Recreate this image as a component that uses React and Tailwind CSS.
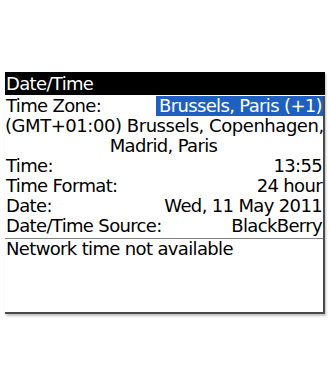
export default function App() {
  const rows = [
    ["Time:", "13:55"],
    ["Time Format:", "24 hour"],
    ["Date:", "Wed, 11 May 2011"],
    ["Date/Time Source:", "BlackBerry"],
  ];

  return (
    <div
      className="h-[385px] w-[330px] bg-white pl-[5px] pt-[72px] text-black"
      style={{ fontFamily: '"DejaVu Sans", sans-serif' }}
    >
      <div className="w-[320px] shadow-[1px_2px_2px_rgba(0,0,0,0.25)]">
        <div className="flex h-[23px] items-center bg-black pl-[1px] text-[18px] leading-[20px] tracking-[-0.65px] text-white">
          Date/Time
        </div>
        <div className="h-[218px] border-b-2 border-r-2 border-[#4a4a4a] text-[18px] leading-[20px] tracking-[-0.65px]">
          <div className="mt-[1px] flex justify-between">
            <span className="pl-[1px]">Time Zone:</span>
            <span className="bg-[#1e5fbf] pl-[3px] pr-[1px] text-white">Brussels, Paris (+1)</span>
          </div>
          <div className="whitespace-nowrap pr-[1px] text-center">
            <span className="tracking-[-0.45px]">(GMT+01:00) Brussels, Copenhagen,</span>
            <br />
            Madrid, Paris
          </div>
          {rows.map(([k, v]) => (
            <div key={k} className="flex justify-between pl-[1px] pr-[1px]">
              <span>{k}</span>
              <span>{v}</span>
            </div>
          ))}
          <div className="mt-[2px] border-t border-[#808080] pl-[1px]">
            Network time not available
          </div>
        </div>
      </div>
    </div>
  );
}
